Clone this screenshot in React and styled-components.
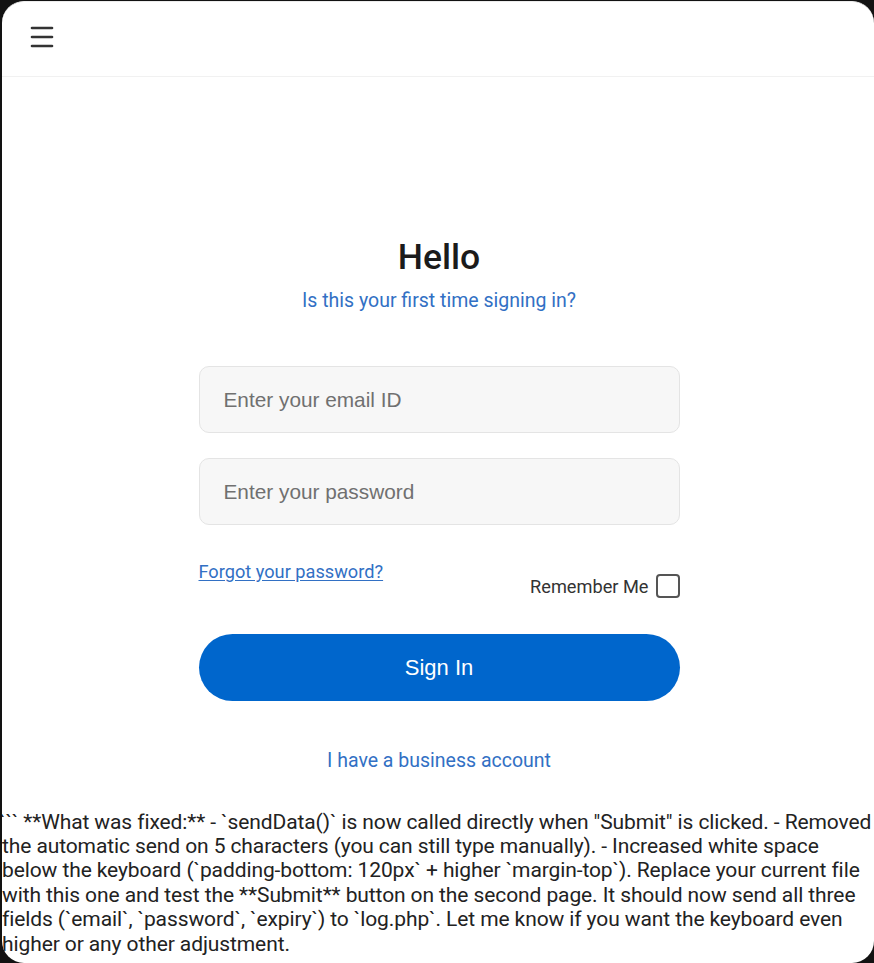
import React from "react";
import styled, { createGlobalStyle } from "styled-components";

const Global = createGlobalStyle`
  html, body { margin: 0; padding: 0; background: #121212; }
  body { font-family: Roboto, "Noto Sans", Arial, sans-serif; }
  * { box-sizing: border-box; }
`;

const Frame = styled.div`
  width: 874px;
  height: 963px;
  padding: 1px 0 0 2px;
  background: #121212;
`;

const Panel = styled.div`
  width: 872px;
  height: 962px;
  background: #fff;
  border-radius: 22px;
  border-top: 1px solid #ececec;
  overflow: hidden;
  display: flex;
  flex-direction: column;
`;

const Header = styled.header`
  height: 75px;
  flex: none;
  display: flex;
  align-items: center;
  padding: 0 0 4px 27px;
  border-bottom: 1px solid #f1f1f1;
`;

const MenuButton = styled.button`
  border: 0;
  background: none;
  padding: 0;
  width: 26px;
  height: 26px;
  display: flex;
  align-items: center;
  justify-content: center;
  cursor: pointer;
`;

const Main = styled.main`
  width: 481px;
  margin: 0 auto;
  padding-top: 163px;
  display: flex;
  flex-direction: column;
  transform: translateX(1px);
`;

const Title = styled.h1`
  margin: 0;
  font-size: 35.5px;
  line-height: 35px;
  font-weight: 500;
  color: #1b1b1b;
  text-align: center;
`;

const BlueLink = styled.a`
  display: block;
  font-size: ${(p) => p.$size || 19.5}px;
  line-height: 22px;
  color: #3270c4;
  text-decoration: ${(p) => (p.$underline ? "underline" : "none")};
  text-underline-offset: 2px;
  text-align: ${(p) => p.$align || "center"};
  margin-top: ${(p) => p.$mt || 0}px;
  cursor: pointer;
`;

const Field = styled.input`
  width: 100%;
  height: 67px;
  margin-top: ${(p) => p.$mt}px;
  border: 1px solid #e4e4e4;
  border-radius: 10px;
  background: #f7f7f7;
  padding: 0 24px;
  font-family: "Liberation Sans", Arial, sans-serif;
  font-size: 20.8px;
  color: #333;
  outline: none;
  &::placeholder { color: #707070; }
`;

const OptionsRow = styled.div`
  margin-top: 34px;
  height: 39px;
  display: flex;
  justify-content: space-between;
  align-items: flex-start;
`;

const Remember = styled.label`
  align-self: flex-end;
  display: flex;
  align-items: center;
  gap: 7px;
  font-size: 18.2px;
  color: #333;
  cursor: pointer;
`;

const Check = styled.span`
  width: 24px;
  height: 24px;
  border: 2px solid #555;
  border-radius: 4px;
  background: #fff;
`;

const SignIn = styled.button`
  margin-top: 36px;
  height: 67px;
  width: 100%;
  border: 0;
  border-radius: 34px;
  background: #0066cc;
  color: #fff;
  font-family: "Liberation Sans", Arial, sans-serif;
  font-size: 22px;
  cursor: pointer;
`;

const Notes = styled.div`
  margin-top: auto;
  padding: 0 0 7px 0;
  font-family: Roboto, Arial, sans-serif;
  font-size: 21px;
  line-height: 24.4px;
  letter-spacing: -0.1px;
  color: #222;
  white-space: nowrap;
`;

const Line = styled.div`
  text-indent: ${(p) => (p.$first ? "-3px" : "0")};
`;

const lines = [
  "``` **What was fixed:** - `sendData()` is now called directly when \"Submit\" is clicked. - Removed",
  "the automatic send on 5 characters (you can still type manually). - Increased white space",
  "below the keyboard (`padding-bottom: 120px` + higher `margin-top`). Replace your current file",
  "with this one and test the **Submit** button on the second page. It should now send all three",
  "fields (`email`, `password`, `expiry`) to `log.php`. Let me know if you want the keyboard even",
  "higher or any other adjustment.",
];

export default function App() {
  return (
    <>
      <Global />
      <Frame>
        <Panel>
          <Header>
            <MenuButton aria-label="Menu">
              <svg width="24" height="22" viewBox="0 0 24 22">
                <g stroke="#333" strokeWidth="2.6" strokeLinecap="round">
                  <line x1="2" y1="2" x2="22" y2="2" />
                  <line x1="2" y1="11" x2="22" y2="11" />
                  <line x1="2" y1="20" x2="22" y2="20" />
                </g>
              </svg>
            </MenuButton>
          </Header>
          <Main>
            <Title>Hello</Title>
            <BlueLink $mt={15}>Is this your first time signing in?</BlueLink>
            <Field $mt={54} placeholder="Enter your email ID" />
            <Field $mt={25} type="password" placeholder="Enter your password" />
            <OptionsRow>
              <BlueLink $underline $align="left" $size={18.2} $mt={2}>Forgot your password?</BlueLink>
              <Remember>
                Remember Me
                <Check />
              </Remember>
            </OptionsRow>
            <SignIn>Sign In</SignIn>
            <BlueLink $mt={49}>I have a business account</BlueLink>
          </Main>
          <Notes>
            {lines.map((l, i) => (
              <Line key={i} $first={i === 0}>{l}</Line>
            ))}
          </Notes>
        </Panel>
      </Frame>
    </>
  );
}
